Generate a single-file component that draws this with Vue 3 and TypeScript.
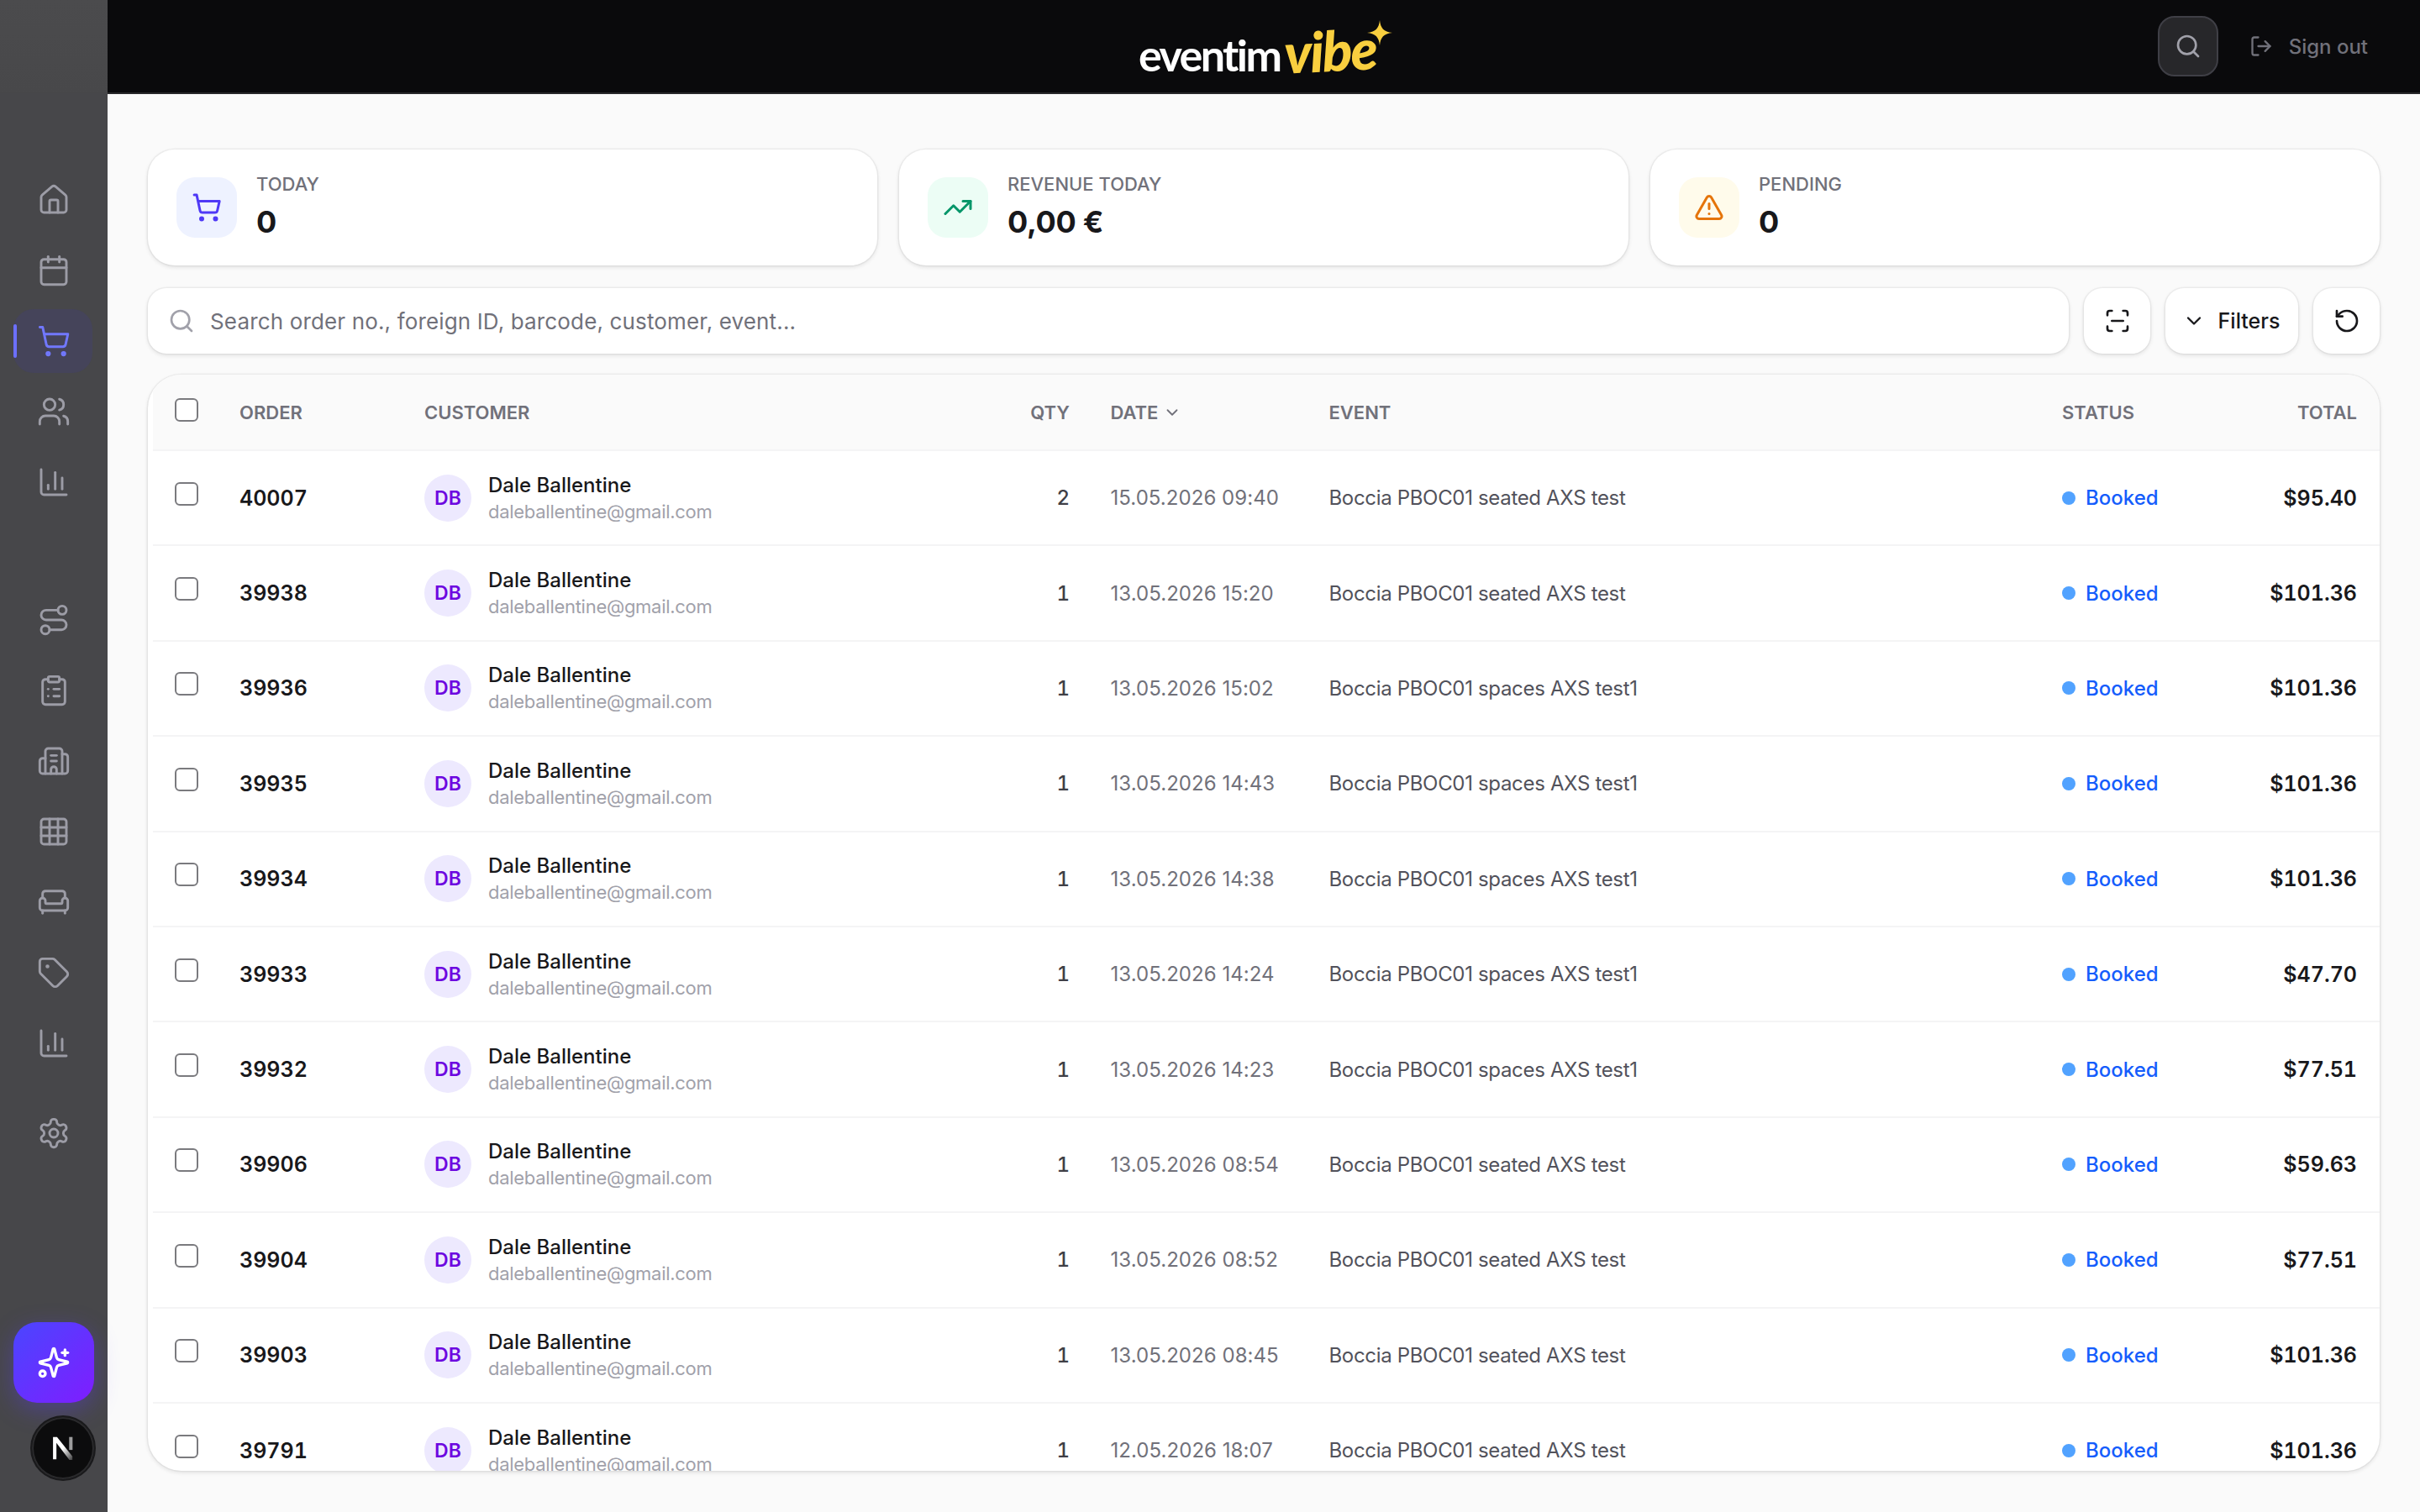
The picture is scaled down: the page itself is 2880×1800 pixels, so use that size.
<script setup lang="ts">
const icons: Record<string, string> = {
  home: '<path d="M15 21v-8a1 1 0 0 0-1-1h-4a1 1 0 0 0-1 1v8"/><path d="M3 10a2 2 0 0 1 .709-1.528l7-5.999a2 2 0 0 1 2.582 0l7 5.999A2 2 0 0 1 21 10v9a2 2 0 0 1-2 2H5a2 2 0 0 1-2-2z"/>',
  calendar: '<path d="M8 2v4"/><path d="M16 2v4"/><rect width="18" height="18" x="3" y="4" rx="2"/><path d="M3 10h18"/>',
  cart: '<circle cx="8" cy="21" r="1"/><circle cx="19" cy="21" r="1"/><path d="M2.05 2.05h2l2.66 12.42a2 2 0 0 0 2 1.58h9.78a2 2 0 0 0 1.95-1.57l1.65-7.43H5.12"/>',
  users: '<path d="M16 21v-2a4 4 0 0 0-4-4H6a4 4 0 0 0-4 4v2"/><circle cx="9" cy="7" r="4"/><path d="M22 21v-2a4 4 0 0 0-3-3.87"/><path d="M16 3.13a4 4 0 0 1 0 7.75"/>',
  chart: '<path d="M3 3v16a2 2 0 0 0 2 2h16"/><path d="M18 17V9"/><path d="M13 17V5"/><path d="M8 17v-3"/>',
  route: '<circle cx="6" cy="19" r="3"/><path d="M9 19h8.5a3.5 3.5 0 0 0 0-7h-11a3.5 3.5 0 0 1 0-7H15"/><circle cx="18" cy="5" r="3"/>',
  clipboard: '<rect width="8" height="4" x="8" y="2" rx="1" ry="1"/><path d="M16 4h2a2 2 0 0 1 2 2v14a2 2 0 0 1-2 2H6a2 2 0 0 1-2-2V6a2 2 0 0 1 2-2h2"/><path d="M12 11h4"/><path d="M12 16h4"/><path d="M8 11h.01"/><path d="M8 16h.01"/>',
  building: '<path d="M10 12h4"/><path d="M10 8h4"/><path d="M14 21v-3a2 2 0 0 0-4 0v3"/><path d="M6 10H4a2 2 0 0 0-2 2v7a2 2 0 0 0 2 2h16a2 2 0 0 0 2-2V9a2 2 0 0 0-2-2h-2"/><path d="M6 21V5a2 2 0 0 1 2-2h8a2 2 0 0 1 2 2v16"/>',
  grid: '<rect width="18" height="18" x="3" y="3" rx="2"/><path d="M3 9h18"/><path d="M3 15h18"/><path d="M9 3v18"/><path d="M15 3v18"/>',
  sofa: '<path d="M20 9V6a2 2 0 0 0-2-2H6a2 2 0 0 0-2 2v3"/><path d="M2 16a2 2 0 0 0 2 2h16a2 2 0 0 0 2-2v-5a2 2 0 0 0-4 0v1.5a.5.5 0 0 1-.5.5h-11a.5.5 0 0 1-.5-.5V11a2 2 0 0 0-4 0z"/><path d="M4 18v2"/><path d="M20 18v2"/>',
  tag: '<path d="M12.586 2.586A2 2 0 0 0 11.172 2H4a2 2 0 0 0-2 2v7.172a2 2 0 0 0 .586 1.414l8.704 8.704a2.426 2.426 0 0 0 3.42 0l6.58-6.58a2.426 2.426 0 0 0 0-3.42z"/><circle cx="7.5" cy="7.5" r=".5" fill="currentColor"/>',
  settings: '<path d="M12.22 2h-.44a2 2 0 0 0-2 2v.18a2 2 0 0 1-1 1.73l-.43.25a2 2 0 0 1-2 0l-.15-.08a2 2 0 0 0-2.73.73l-.22.38a2 2 0 0 0 .73 2.73l.15.1a2 2 0 0 1 1 1.72v.51a2 2 0 0 1-1 1.74l-.15.09a2 2 0 0 0-.73 2.73l.22.38a2 2 0 0 0 2.73.73l.15-.08a2 2 0 0 1 2 0l.43.25a2 2 0 0 1 1 1.73V20a2 2 0 0 0 2 2h.44a2 2 0 0 0 2-2v-.18a2 2 0 0 1 1-1.73l.43-.25a2 2 0 0 1 2 0l.15.08a2 2 0 0 0 2.73-.73l.22-.39a2 2 0 0 0-.73-2.73l-.15-.08a2 2 0 0 1-1-1.74v-.5a2 2 0 0 1 1-1.74l.15-.09a2 2 0 0 0 .73-2.73l-.22-.38a2 2 0 0 0-2.73-.73l-.15.08a2 2 0 0 1-2 0l-.43-.25a2 2 0 0 1-1-1.73V4a2 2 0 0 0-2-2z"/><circle cx="12" cy="12" r="3"/>',
  sparkles: '<path d="M9.937 15.5A2 2 0 0 0 8.5 14.063l-6.135-1.582a.5.5 0 0 1 0-.962L8.5 9.936A2 2 0 0 0 9.937 8.5l1.582-6.135a.5.5 0 0 1 .963 0L14.063 8.5A2 2 0 0 0 15.5 9.937l6.135 1.581a.5.5 0 0 1 0 .964L15.5 14.063a2 2 0 0 0-1.437 1.437l-1.582 6.135a.5.5 0 0 1-.963 0z"/><path d="M20 3v4"/><path d="M22 5h-4"/><circle cx="4" cy="20" r="2"/>',
  trending: '<polyline points="22 7 13.5 15.5 8.5 10.5 2 17"/><polyline points="16 7 22 7 22 13"/>',
  alert: '<path d="m21.73 18-8-14a2 2 0 0 0-3.48 0l-8 14A2 2 0 0 0 4 21h16a2 2 0 0 0 1.73-3"/><path d="M12 9v4"/><path d="M12 17h.01"/>',
  search: '<path d="m21 21-4.34-4.34"/><circle cx="11" cy="11" r="8"/>',
  logout: '<path d="M9 21H5a2 2 0 0 1-2-2V5a2 2 0 0 1 2-2h4"/><path d="m16 17 5-5-5-5"/><path d="M21 12H9"/>',
  scan: '<path d="M3 7V5a2 2 0 0 1 2-2h2"/><path d="M17 3h2a2 2 0 0 1 2 2v2"/><path d="M21 17v2a2 2 0 0 1-2 2h-2"/><path d="M7 21H5a2 2 0 0 1-2-2v-2"/><path d="M7 12h10"/>',
  chevron: '<path d="m6 9 6 6 6-6"/>',
  reset: '<path d="M3 12a9 9 0 1 0 9-9 9.75 9.75 0 0 0-6.74 2.74L3 8"/><path d="M3 3v5h5"/>'
}

const navGroups = [
  { cls: 'nav-main', items: ['home', 'calendar', 'cart', 'users', 'chart'] },
  { cls: 'nav-manage', items: ['route', 'clipboard', 'building', 'grid', 'sofa', 'tag', 'chart'] },
  { cls: 'nav-settings', items: ['settings'] }
]

const stats = [
  { label: 'Today', value: '0', icon: 'cart', tone: 'tone-blue' },
  { label: 'Revenue today', value: '0,00 €', icon: 'trending', tone: 'tone-green' },
  { label: 'Pending', value: '0', icon: 'alert', tone: 'tone-amber' }
]

const seated = 'Boccia PBOC01 seated AXS test'
const spaces = 'Boccia PBOC01 spaces AXS test1'

const orders = [
  { id: '40007', qty: 2, date: '15.05.2026 09:40', event: seated, total: '$95.40' },
  { id: '39938', qty: 1, date: '13.05.2026 15:20', event: seated, total: '$101.36' },
  { id: '39936', qty: 1, date: '13.05.2026 15:02', event: spaces, total: '$101.36' },
  { id: '39935', qty: 1, date: '13.05.2026 14:43', event: spaces, total: '$101.36' },
  { id: '39934', qty: 1, date: '13.05.2026 14:38', event: spaces, total: '$101.36' },
  { id: '39933', qty: 1, date: '13.05.2026 14:24', event: spaces, total: '$47.70' },
  { id: '39932', qty: 1, date: '13.05.2026 14:23', event: spaces, total: '$77.51' },
  { id: '39906', qty: 1, date: '13.05.2026 08:54', event: seated, total: '$59.63' },
  { id: '39904', qty: 1, date: '13.05.2026 08:52', event: seated, total: '$77.51' },
  { id: '39903', qty: 1, date: '13.05.2026 08:45', event: seated, total: '$101.36' },
  { id: '39791', qty: 1, date: '12.05.2026 18:07', event: seated, total: '$101.36' }
]
</script>

<template>
  <div class="app">
    <aside class="sidebar">
      <div class="sidebar-top" />
      <nav class="nav">
        <div v-for="group in navGroups" :key="group.cls" class="nav-group" :class="group.cls">
          <a
            v-for="(item, index) in group.items"
            :key="index"
            class="nav-item"
            :class="{ 'nav-item--active': item === 'cart' }"
          >
            <svg class="ico nav-ico" viewBox="0 0 24 24" v-html="icons[item]" />
          </a>
        </div>
      </nav>
      <button class="ai-btn">
        <svg class="ico ai-ico" viewBox="0 0 24 24" v-html="icons.sparkles" />
      </button>
      <div class="next-badge">
        <svg viewBox="0 0 40 40" class="next-mark">
          <defs>
            <linearGradient id="nextFade" x1="0" y1="0" x2="1" y2="1">
              <stop offset="0.5" stop-color="#fff" />
              <stop offset="1" stop-color="#fff" stop-opacity="0.2" />
            </linearGradient>
          </defs>
          <path d="M11.5 10.5h3.4L28 27v3h-2.6L14.4 15.6V29.5h-2.9z" fill="url(#nextFade)" />
          <rect x="25.2" y="10.5" width="2.9" height="11" fill="#fff" opacity="0.6" />
        </svg>
      </div>
    </aside>

    <div class="column">
      <header class="topbar">
        <div class="logo">
          <span class="logo-word">eventim</span><span class="logo-vibe">vibe</span>
          <svg class="logo-star" viewBox="0 0 32 32">
            <path d="M16 0c1 10 5 15 16 16-11 1-15 6-16 16-1-10-5-15-16-16 11-1 15-6 16-16z" fill="#f9cf3f" />
          </svg>
        </div>
        <div class="topbar-actions">
          <button class="top-search">
            <svg class="ico top-search-ico" viewBox="0 0 24 24" v-html="icons.search" />
          </button>
          <a class="signout">
            <svg class="ico signout-ico" viewBox="0 0 24 24" v-html="icons.logout" />
            <span>Sign out</span>
          </a>
        </div>
      </header>

      <main class="content">
        <section class="stats">
          <div v-for="stat in stats" :key="stat.label" class="stat-card">
            <div class="stat-icon" :class="stat.tone">
              <svg class="ico stat-ico" viewBox="0 0 24 24" v-html="icons[stat.icon]" />
            </div>
            <div class="stat-text">
              <div class="stat-label">{{ stat.label }}</div>
              <div class="stat-value">{{ stat.value }}</div>
            </div>
          </div>
        </section>

        <section class="toolbar">
          <div class="searchbox surface">
            <svg class="ico searchbox-ico" viewBox="0 0 24 24" v-html="icons.search" />
            <span class="searchbox-text">Search order no., foreign ID, barcode, customer, event...</span>
          </div>
          <button class="tool-btn surface">
            <svg class="ico tool-ico" viewBox="0 0 24 24" v-html="icons.scan" />
          </button>
          <button class="tool-btn tool-btn--wide surface">
            <svg class="ico filter-ico" viewBox="0 0 24 24" v-html="icons.chevron" />
            <span>Filters</span>
          </button>
          <button class="tool-btn surface">
            <svg class="ico tool-ico" viewBox="0 0 24 24" v-html="icons.reset" />
          </button>
        </section>

        <section class="table-card">
          <div class="row row--head">
            <div class="cell-check"><span class="checkbox" /></div>
            <div>Order</div>
            <div>Customer</div>
            <div class="cell-right">Qty</div>
            <div class="cell-date head-sort">
              Date
              <svg class="ico sort-ico" viewBox="0 0 24 24" v-html="icons.chevron" />
            </div>
            <div>Event</div>
            <div>Status</div>
            <div class="cell-right">Total</div>
          </div>

          <div v-for="order in orders" :key="order.id" class="row">
            <div class="cell-check"><span class="checkbox" /></div>
            <div class="order-id">{{ order.id }}</div>
            <div class="customer">
              <span class="avatar">DB</span>
              <div class="customer-text">
                <div class="customer-name">Dale Ballentine</div>
                <div class="customer-mail">daleballentine@gmail.com</div>
              </div>
            </div>
            <div class="cell-right qty">{{ order.qty }}</div>
            <div class="cell-date date">{{ order.date }}</div>
            <div class="event">{{ order.event }}</div>
            <div class="status"><i class="status-dot" />Booked</div>
            <div class="cell-right total">{{ order.total }}</div>
          </div>
        </section>
      </main>
    </div>
  </div>
</template>

<style>
html,
body {
  margin: 0;
  background: #fafafa;
}
</style>

<style scoped>
.app {
  display: flex;
  width: 2880px;
  height: 1800px;
  overflow: hidden;
  font-family: Inter, "Noto Sans", sans-serif;
  color: #18181b;
}

.ico {
  display: block;
  fill: none;
  stroke: currentColor;
  stroke-width: 2;
  stroke-linecap: round;
  stroke-linejoin: round;
}

.sidebar {
  position: relative;
  flex: 0 0 128px;
  display: flex;
  flex-direction: column;
  background: #47474a;
}

.sidebar-top {
  height: 110px;
  background: linear-gradient(#4b4b4d, #48484a);
  border-bottom: 1px solid #464649;
}

.nav {
  flex: 1;
  display: flex;
  flex-direction: column;
  padding: 89px 16px 0;
}

.nav-group {
  display: flex;
  flex-direction: column;
  gap: 8px;
}

.nav-manage {
  margin-top: 88px;
}

.nav-settings {
  margin-top: 31px;
}

.nav-item {
  position: relative;
  display: flex;
  width: 94px;
  height: 76px;
  box-sizing: border-box;
  align-items: center;
  justify-content: center;
  padding-left: 2px;
  border-radius: 24px;
  color: #9c9ca6;
}

.nav-ico {
  width: 40px;
  height: 40px;
  stroke-width: 1.75;
}

.nav-item--active {
  background: #45445a;
  color: #7178ff;
}

.nav-item--active::before {
  content: "";
  position: absolute;
  left: 0;
  top: 18px;
  width: 4px;
  height: 40px;
  border-radius: 2px;
  background: #6c70ff;
}

.ai-btn {
  position: absolute;
  left: 16px;
  top: 1574px;
  display: flex;
  width: 96px;
  height: 96px;
  align-items: center;
  justify-content: center;
  padding: 0;
  border: 0;
  border-radius: 28px;
  background: linear-gradient(135deg, #4a46ff, #7f1dff);
  box-shadow: 0 8px 28px rgba(92, 60, 255, 0.35);
  color: #fff;
}

.ai-ico {
  width: 40px;
  height: 40px;
}

.next-badge {
  position: absolute;
  left: 38px;
  top: 1687px;
  display: flex;
  width: 74px;
  height: 74px;
  box-sizing: border-box;
  align-items: center;
  justify-content: center;
  border-radius: 50%;
  background: #0c0c0d;
  box-shadow: inset 0 0 0 2px #2a2a2c, 0 0 0 2px #1a1a1c;
}

.next-mark {
  width: 56px;
  height: 56px;
}

.column {
  flex: 1;
  min-width: 0;
  display: flex;
  flex-direction: column;
}

.topbar {
  position: relative;
  flex: 0 0 112px;
  box-sizing: border-box;
  display: flex;
  align-items: center;
  justify-content: flex-end;
  padding-right: 62px;
  background: #0a0a0c;
  border-bottom: 2px solid #27272a;
}

.logo {
  position: absolute;
  left: 1227px;
  top: 29px;
  display: flex;
  align-items: baseline;
  line-height: 62px;
  white-space: nowrap;
}

.logo-word {
  font-family: Lato, sans-serif;
  font-size: 52px;
  font-weight: 700;
  letter-spacing: -2.6px;
  color: #fff;
}

.logo-vibe {
  margin-left: 5px;
  font-family: Lato, sans-serif;
  font-size: 66px;
  font-style: italic;
  font-weight: 900;
  letter-spacing: -2px;
  color: #f9cf3f;
  transform: rotate(-3deg);
}

.logo-star {
  position: absolute;
  right: -19px;
  top: -5px;
  width: 30px;
  height: 30px;
}

.topbar-actions {
  display: flex;
  align-items: center;
  gap: 37px;
}

.top-search {
  display: flex;
  width: 72px;
  height: 72px;
  box-sizing: border-box;
  align-items: center;
  justify-content: center;
  padding: 0;
  border: 2px solid #3f3f46;
  border-radius: 20px;
  background: #27272a;
  color: #a1a1aa;
}

.top-search-ico {
  width: 32px;
  height: 32px;
}

.signout {
  display: flex;
  align-items: center;
  gap: 19px;
  font-size: 24px;
  font-weight: 500;
  color: #71717a;
}

.signout-ico {
  width: 28px;
  height: 28px;
}

.content {
  flex: 1;
  min-height: 0;
  display: flex;
  flex-direction: column;
  padding: 66px 48px 49px;
}

.stats {
  display: grid;
  grid-template-columns: repeat(3, 1fr);
  gap: 26px;
}

.stat-card {
  display: flex;
  height: 138px;
  box-sizing: border-box;
  align-items: center;
  gap: 23px;
  padding: 0 34px;
  border-radius: 32px;
  background: #fff;
  box-shadow: 0 0 0 1.5px rgba(0, 0, 0, 0.04), 0 2px 4px 1px rgba(0, 0, 0, 0.08);
}

.stat-icon {
  display: flex;
  flex: 0 0 72px;
  height: 72px;
  align-items: center;
  justify-content: center;
  border-radius: 22px;
}

.tone-blue {
  background: #eef2ff;
  color: #4f39f6;
}

.tone-green {
  background: #ecfdf5;
  color: #059669;
}

.tone-amber {
  background: #fffbeb;
  color: #e5740a;
}

.stat-ico {
  width: 36px;
  height: 36px;
}

.stat-text {
  margin-top: -3px;
}

.stat-label {
  font-size: 22px;
  font-weight: 500;
  line-height: 32px;
  text-transform: uppercase;
  color: #71717a;
}

.stat-value {
  margin-top: 5px;
  font-size: 36px;
  font-weight: 700;
  line-height: 48px;
  letter-spacing: -0.3px;
  color: #18181b;
}

.toolbar {
  display: flex;
  height: 78px;
  gap: 18px;
  margin-top: 27px;
}

.surface {
  box-sizing: border-box;
  border: 0;
  border-radius: 22px;
  background: #fff;
  box-shadow: 0 0 0 1.5px rgba(0, 0, 0, 0.04), 0 2px 4px 1px rgba(0, 0, 0, 0.08);
}

.searchbox {
  flex: 1;
  display: flex;
  align-items: center;
  gap: 18px;
  padding-left: 24px;
}

.searchbox-ico {
  width: 32px;
  height: 32px;
  color: #a1a1aa;
}

.searchbox-text {
  font-size: 26px;
  letter-spacing: 0.15px;
  color: #71717a;
}

.tool-btn {
  display: flex;
  flex: 0 0 79px;
  align-items: center;
  justify-content: center;
  padding: 0;
  color: #18181b;
  font-family: inherit;
  font-size: 25px;
  font-weight: 500;
}

.tool-btn--wide {
  flex: 0 0 158px;
  gap: 15px;
  padding-right: 2px;
}

.tool-ico {
  width: 32px;
  height: 32px;
}

.filter-ico {
  width: 28px;
  height: 28px;
}

.table-card {
  flex: 1;
  min-height: 0;
  margin-top: 25px;
  overflow: hidden;
  border-radius: 40px;
  background: #fff;
  box-shadow: 0 0 0 1.5px rgba(0, 0, 0, 0.04), 0 2px 4px 1px rgba(0, 0, 0, 0.08);
}

.row {
  display: grid;
  grid-template-columns: 77px 220px 668px 100px 308.5px 872.5px 186px 165px;
  box-sizing: border-box;
  height: 113.4px;
  align-items: center;
  margin-left: 6px;
  padding: 0 27px 0 26px;
  border-bottom: 2px solid #f4f4f5;
}

.row--head {
  height: 91px;
  background: #fafafa;
  font-size: 22px;
  font-weight: 600;
  text-transform: uppercase;
  color: #71717a;
}

.checkbox {
  display: block;
  width: 28px;
  height: 28px;
  box-sizing: border-box;
  margin-top: -10px;
  border: 2px solid #7a7a7e;
  border-radius: 6px;
  background: #fff;
}

.row--head .checkbox {
  margin-top: -6px;
}

.cell-right {
  text-align: right;
}

.cell-date {
  padding-left: 48.5px;
}

.head-sort {
  display: flex;
  align-items: center;
  gap: 6px;
}

.sort-ico {
  width: 22px;
  height: 22px;
}

.order-id {
  font-size: 25px;
  font-weight: 600;
  font-variant-numeric: tabular-nums;
}

.customer {
  display: flex;
  align-items: center;
  gap: 20px;
}

.avatar {
  display: flex;
  flex: 0 0 56px;
  height: 56px;
  align-items: center;
  justify-content: center;
  border-radius: 50%;
  background: #ede9fe;
  font-size: 23px;
  font-weight: 600;
  color: #6d08e0;
}

.customer-name {
  font-size: 24px;
  font-weight: 500;
  line-height: 32px;
  color: #18181b;
}

.customer-mail {
  font-size: 22px;
  line-height: 30px;
  letter-spacing: -0.28px;
  color: #a1a1aa;
}

.qty {
  font-size: 24px;
  font-weight: 500;
  font-variant-numeric: tabular-nums;
  color: #3f3f46;
}

.date {
  font-size: 24px;
  letter-spacing: 0.05px;
  color: #71717a;
}

.event {
  font-size: 24px;
  letter-spacing: -0.33px;
  color: #52525b;
}

.status {
  display: flex;
  align-items: center;
  gap: 12px;
  font-size: 24px;
  font-weight: 500;
  color: #155dfc;
}

.status-dot {
  width: 16px;
  height: 16px;
  border-radius: 50%;
  background: #51a2ff;
}

.total {
  font-size: 25px;
  font-weight: 600;
  font-variant-numeric: tabular-nums;
}
</style>
